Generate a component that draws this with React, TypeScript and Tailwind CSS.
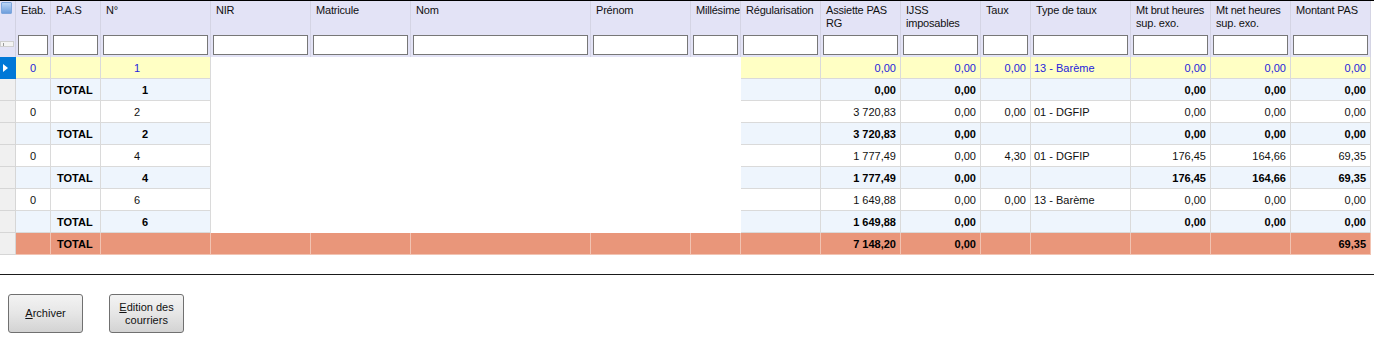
import React from "react";

type Kind = "sel" | "data" | "total" | "grand";

type Row = {
  kind: Kind;
  etab?: string;
  pas?: string;
  n?: string;
  assiette?: string;
  ijss?: string;
  taux?: string;
  type?: string;
  brut?: string;
  net?: string;
  montant?: string;
};

const nb = (s: string) => s.replace(" ", "\u00a0");

const columns = [
  { key: "etab", label: "Etab.", w: "w-[35px]" },
  { key: "pas", label: "P.A.S", w: "w-[50px]" },
  { key: "n", label: "N°", w: "w-[110px]" },
  { key: "nir", label: "NIR", w: "w-[100px]", blank: true },
  { key: "matricule", label: "Matricule", w: "w-[100px]", blank: true },
  { key: "nom", label: "Nom", w: "w-[180px]", blank: true },
  { key: "prenom", label: "Prénom", w: "w-[100px]", blank: true },
  { key: "millesime", label: "Millésime", w: "w-[50px]", blank: true },
  { key: "regul", label: "Régularisation", w: "w-[80px]" },
  { key: "assiette", label: "Assiette PAS RG", w: "w-[80px]" },
  { key: "ijss", label: "IJSS imposables", w: "w-[80px]" },
  { key: "taux", label: "Taux", w: "w-[50px]" },
  { key: "type", label: "Type de taux", w: "w-[100px]" },
  { key: "brut", label: "Mt brut heures sup. exo.", w: "w-[80px]" },
  { key: "net", label: "Mt net heures sup. exo.", w: "w-[80px]" },
  { key: "montant", label: "Montant PAS", w: "w-[80px]" },
];

const rows: Row[] = [
  { kind: "sel", etab: "0", n: "1", assiette: "0,00", ijss: "0,00", taux: "0,00", type: "13 - Barème", brut: "0,00", net: "0,00", montant: "0,00" },
  { kind: "total", pas: "TOTAL", n: "1", assiette: "0,00", ijss: "0,00", brut: "0,00", net: "0,00", montant: "0,00" },
  { kind: "data", etab: "0", n: "2", assiette: "3 720,83", ijss: "0,00", taux: "0,00", type: "01 - DGFIP", brut: "0,00", net: "0,00", montant: "0,00" },
  { kind: "total", pas: "TOTAL", n: "2", assiette: "3 720,83", ijss: "0,00", brut: "0,00", net: "0,00", montant: "0,00" },
  { kind: "data", etab: "0", n: "4", assiette: "1 777,49", ijss: "0,00", taux: "4,30", type: "01 - DGFIP", brut: "176,45", net: "164,66", montant: "69,35" },
  { kind: "total", pas: "TOTAL", n: "4", assiette: "1 777,49", ijss: "0,00", brut: "176,45", net: "164,66", montant: "69,35" },
  { kind: "data", etab: "0", n: "6", assiette: "1 649,88", ijss: "0,00", taux: "0,00", type: "13 - Barème", brut: "0,00", net: "0,00", montant: "0,00" },
  { kind: "total", pas: "TOTAL", n: "6", assiette: "1 649,88", ijss: "0,00", brut: "0,00", net: "0,00", montant: "0,00" },
  { kind: "grand", pas: "TOTAL", assiette: "7 148,20", ijss: "0,00", montant: "69,35" },
];

const rowBg: Record<Kind, string> = {
  sel: "bg-[#ffffc4] text-[#2424dc]",
  data: "bg-white text-[#111]",
  total: "bg-[#eef5fd] text-black font-bold",
  grand: "bg-[#e9967a] text-black font-bold",
};

const Cell = ({ row, col }: { row: Row; col: (typeof columns)[number] }) => {
  if (col.blank && row.kind !== "grand") {
    return <div className={`${col.w} h-full bg-white shrink-0`} />;
  }
  const border =
    row.kind === "grand"
      ? "border-r border-b border-[#f2c3b2]"
      : "border-r border-b border-[#dadada]";
  const value = (row as Record<string, string | undefined>)[col.key] ?? "";

  let align = "justify-end pr-[4px]";
  if (col.key === "etab") align = "justify-center";
  else if (col.key === "pas") align = "justify-start pl-[6px]";
  else if (col.key === "n")
    align = row.kind === "total" ? "justify-start pl-[41px]" : "justify-start pl-[33px]";
  else if (col.key === "type") align = "justify-start pl-[3px]";

  return (
    <div className={`${col.w} h-full shrink-0 flex items-center pt-[2px] ${align} ${border} whitespace-nowrap`}>
      {nb(value)}
    </div>
  );
};

const Header = () => (
  <div className="flex h-[56px] bg-[#e3e3f6]">
    <div className="w-[16px] shrink-0 h-full border-r border-[#d2d2e2] flex flex-col">
      <div className="mt-[1px] ml-[1px] w-[11px] h-[12px] rounded-[1px] bg-linear-to-b from-[#b9d4f5] to-[#6f9fdc] border border-[#7ea6dc]" />
      <div className="mt-[27px] h-[6px] w-[14px] bg-[#f4f4f4] border border-[#cfcfcf] flex items-center pl-[2px]">
        <div className="w-[1px] h-[3px] bg-[#9a9a9a]" />
      </div>
    </div>
    {columns.map((c) => (
      <div key={c.key} className={`${c.w} shrink-0 h-full border-r border-[#d4d4e4] flex flex-col`}>
        <div className="h-[34px] pt-[3px] pl-[5px] pr-[1px] leading-[13px] tracking-[-0.2px] text-[#111] overflow-hidden">
          {c.label}
        </div>
        <div className="mx-[2px] h-[20px] bg-white border border-[#777]" />
      </div>
    ))}
  </div>
);

const WinButton = ({ children }: { children: React.ReactNode }) => (
  <div className="w-[75px] h-[39px] rounded-[3px] border border-[#707070] bg-linear-to-b from-[#f3f3f3] via-[#e6e6e6] to-[#d3d3d3] flex items-center justify-center text-center leading-[13px] text-[#111]">
    {children}
  </div>
);

export default function App() {
  return (
    <div className="w-[1374px] h-[341px] bg-white border-t border-black overflow-hidden text-[11px] font-['Liberation_Sans',Arial,sans-serif]">
      <div className="w-[1371px]">
        <Header />
        {rows.map((r, i) => (
          <div key={i} className={`flex h-[22px] ${rowBg[r.kind]}`}>
            <div
              className={`w-[16px] shrink-0 h-full border-r border-b flex items-center ${
                r.kind === "sel" ? "bg-[#0078d7] border-[#0078d7]" : "bg-[#f0f0f0] border-[#d6d6d6]"
              }`}
            >
              {r.kind === "sel" && (
                <div className="ml-[3px] mt-[1px] w-0 h-0 border-y-[4px] border-y-transparent border-l-[5px] border-l-white" />
              )}
            </div>
            {columns.map((c) => (
              <Cell key={c.key} row={r} col={c} />
            ))}
          </div>
        ))}
      </div>
      <div className="mt-[19px] h-[1px] bg-[#1a1a1a]" />
      <div className="flex gap-[26px] ml-[8px] mt-[19px]">
        <WinButton>
          <span>
            <span className="underline">A</span>rchiver
          </span>
        </WinButton>
        <WinButton>
          <span>
            <span className="underline">E</span>dition des
            <br />
            courriers
          </span>
        </WinButton>
      </div>
    </div>
  );
}
